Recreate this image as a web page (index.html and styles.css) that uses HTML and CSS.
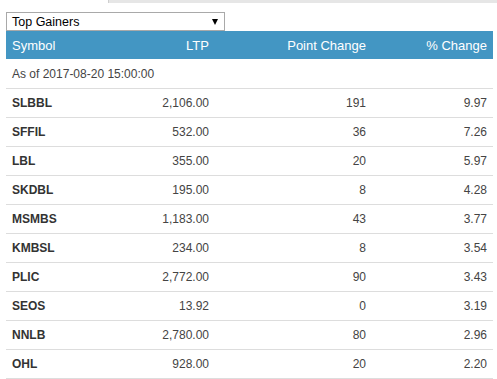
FILE: index.html
```html
<!DOCTYPE html>
<html>
<head>
<meta charset="utf-8">
<link rel="stylesheet" href="styles.css">
</head>
<body>
<div class="tabbar"><div class="tab-rest"></div></div>
<div class="wrap">
  <div class="select"><span class="select-label">Top Gainers</span><span class="caret"></span></div>
  <table class="gainers">
    <colgroup>
      <col class="c1"><col class="c2"><col class="c3"><col class="c4">
    </colgroup>
    <thead>
      <tr><th class="left">Symbol</th><th>LTP</th><th>Point Change</th><th>% Change</th></tr>
    </thead>
    <tbody>
      <tr><td colspan="4" class="left asof">As of 2017-08-20 15:00:00</td></tr>
      <tr><td class="sym">SLBBL</td><td>2,106.00</td><td>191</td><td>9.97</td></tr>
      <tr><td class="sym">SFFIL</td><td>532.00</td><td>36</td><td>7.26</td></tr>
      <tr><td class="sym">LBL</td><td>355.00</td><td>20</td><td>5.97</td></tr>
      <tr><td class="sym">SKDBL</td><td>195.00</td><td>8</td><td>4.28</td></tr>
      <tr><td class="sym">MSMBS</td><td>1,183.00</td><td>43</td><td>3.77</td></tr>
      <tr><td class="sym">KMBSL</td><td>234.00</td><td>8</td><td>3.54</td></tr>
      <tr><td class="sym">PLIC</td><td>2,772.00</td><td>90</td><td>3.43</td></tr>
      <tr><td class="sym">SEOS</td><td>13.92</td><td>0</td><td>3.19</td></tr>
      <tr><td class="sym">NNLB</td><td>2,780.00</td><td>80</td><td>2.96</td></tr>
      <tr><td class="sym">OHL</td><td>928.00</td><td>20</td><td>2.20</td></tr>
    </tbody>
  </table>
</div>
</body>
</html>
```
FILE: styles.css
```css
html, body {
  margin: 0;
  padding: 0;
  background: #fff;
  font-family: "Liberation Sans", Arial, sans-serif;
  color: #333;
}
.tabbar {
  display: flex;
  height: 3px;
}
.tab-rest {
  margin-left: 108px;
  flex: 1;
  background: #e6e6e6;
  border-left: 1px solid #cfcfcf;
}
.wrap {
  padding: 9px 4px 0 6px;
}
.select {
  box-sizing: border-box;
  width: 219px;
  height: 19px;
  border: 1px solid #a9a9a9;
  display: flex;
  align-items: center;
  justify-content: space-between;
  padding: 0 6px 0 5px;
  font-size: 12.5px;
  color: #000;
}
.caret {
  width: 0;
  height: 0;
  border-left: 3.5px solid transparent;
  border-right: 3.5px solid transparent;
  border-top: 6px solid #000;
}
.gainers {
  width: 487px;
  border-collapse: collapse;
  table-layout: fixed;
  margin-top: 0;
  border-bottom: 1px solid #ddd;
}
.c1 { width: 105px; }
.c2 { width: 104px; }
.c3 { width: 157px; }
.c4 { width: 121px; }
.gainers th {
  background: #4396c3;
  color: #fff;
  font-weight: normal;
  font-size: 13px;
  height: 28px;
  padding: 0 6px;
  text-align: right;
  box-sizing: border-box;
}
.gainers td {
  font-size: 12px;
  height: 28px;
  padding: 0 6px;
  text-align: right;
  border-top: 1px solid #ddd;
  color: #444;
}
.gainers th.left, .gainers td.left { text-align: left; }
.gainers td.asof { border-top: none; color: #444; height: 29px; }
.gainers td.sym {
  text-align: left;
  font-weight: bold;
  color: #333;
}
```
